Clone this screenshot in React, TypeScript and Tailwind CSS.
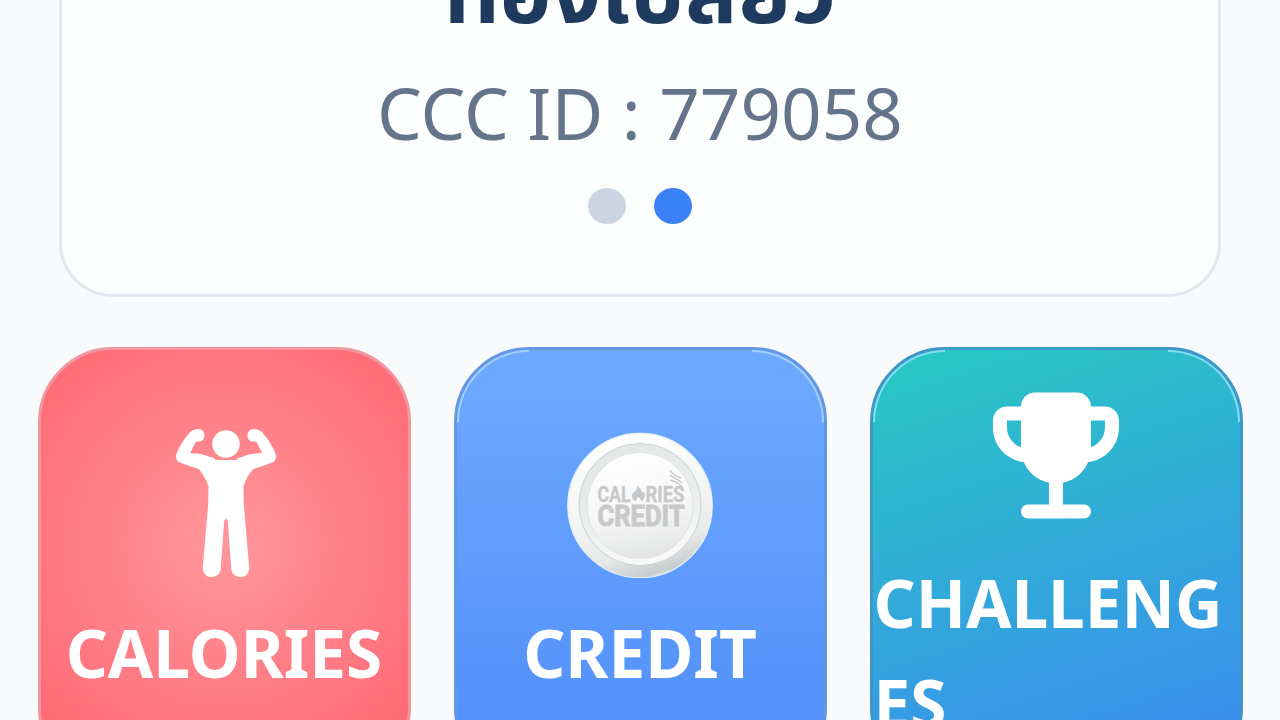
import React from "react"

interface StatCardProps {
  label: string
  className: string
  shine?: string
  children: React.ReactNode
}

function StatCard({ label, className, shine, children }: StatCardProps) {
  return (
    <div
      className={`relative flex h-[436px] w-[373px] shrink-0 flex-col items-center justify-center gap-[25px] rounded-[75px] border-[3px] px-[1px] ${className}`}
    >
      {/* Thin highlight that follows the top corners */}
      {shine && (
        <>
          <span
            className={`absolute top-0 left-0 h-[72px] w-[72px] rounded-tl-[72px] border-t-2 border-l-2 ${shine}`}
          />
          <span
            className={`absolute top-0 right-0 h-[72px] w-[72px] rounded-tr-[72px] border-t-2 border-r-2 ${shine}`}
          />
        </>
      )}
      {children}
      <p className="text-[65.7px] leading-[100px] font-bold break-all text-white">
        {label}
      </p>
    </div>
  )
}

function FlexingPerson() {
  return (
    <svg
      viewBox="-0.7 0.5 150 150"
      className="h-[150px] w-[150px] shrink-0"
      fill="white"
    >
      <circle cx="76.3" cy="16.5" r="13.700" />
      <path d="M49.500 1.500Q44 1 40 5Q31 15 26.500 27Q25.500 32 29 34.500Q40 39 49 41.500Q55 48 58.800 58.500L58.500 77L53 141Q54 149.500 61.500 149.500Q69.500 149.500 71 142L74.500 93Q76.300 90 78.100 93L81.600 142Q83.100 149.500 91.100 149.500Q98.600 149.500 99.600 141L94.100 77L93.800 58.500Q97.600 48 103.600 41.500Q112.600 39 123.600 34.500Q127.100 32 126.100 27Q121.600 15 112.600 5Q108.600 1 103.100 1.500A6.500 6.500 0 0 0 102 14Q106 13.500 107 15L112.500 25.500Q98 26 92.500 29.500Q87.500 29.500 87 32.500H65.600Q65 29.500 60 29.500Q54 26 40.500 25.500L45.600 15Q47 13.500 50.500 14A6.500 6.500 0 0 0 49.500 1.500Z" />
    </svg>
  )
}

function CoinIcon() {
  return (
    <svg viewBox="0 0 150 150" className="h-[150px] w-[150px] shrink-0">
      <defs>
        <linearGradient id="rim" x1="0.3" y1="0" x2="0.6" y2="1">
          <stop offset="0" stopColor="#ffffff" />
          <stop offset="0.45" stopColor="#f5f6f6" />
          <stop offset="0.8" stopColor="#e8eaea" />
          <stop offset="0.97" stopColor="#c9cccd" />
          <stop offset="1" stopColor="#e4e7e9" />
        </linearGradient>
        <linearGradient id="groove" x1="0.3" y1="0" x2="0.6" y2="1">
          <stop offset="0" stopColor="#e2e6e7" />
          <stop offset="0.6" stopColor="#eceeee" />
          <stop offset="1" stopColor="#fafafa" />
        </linearGradient>
        <linearGradient id="face" x1="0.4" y1="0" x2="0.6" y2="1">
          <stop offset="0" stopColor="#ffffff" />
          <stop offset="0.5" stopColor="#f7f7f7" />
          <stop offset="1" stopColor="#e4e6e6" />
        </linearGradient>
      </defs>
      <circle cx="75" cy="77.500" r="72.200" fill="url(#rim)" stroke="#e8f1fc" strokeWidth="1.200" />
      <circle cx="75" cy="76.500" r="61" fill="url(#groove)" stroke="#cdd1d2" strokeWidth="1" />
      <circle cx="75" cy="77.500" r="53" fill="url(#face)" stroke="#e0e3e3" strokeWidth="1" />
      <g
        fill="#c8c9ca"
        stroke="#c8c9ca"
        fontFamily="Roboto, 'Liberation Sans', sans-serif"
        fontWeight="700"
      >
        <text x="32.500" y="73.500" fontSize="22" strokeWidth="0.3" textLength="33" lengthAdjust="spacingAndGlyphs">CAL</text>
        <text x="80.500" y="73.500" fontSize="22" strokeWidth="0.3" textLength="39" lengthAdjust="spacingAndGlyphs">RIES</text>
        <text x="32.500" y="98" fontSize="29" strokeWidth="1" textLength="87" lengthAdjust="spacingAndGlyphs">CREDIT</text>
      </g>
      <path
        d="M72 57.500C76 60 77 63 76.500 65.500L78.500 63C81 67 80 71 76.500 73.500C76 71 74.500 70 73 68.500C72.500 70.500 71 71.500 71 73.500C66.500 72 65.500 67 68.500 64.500C71 62.500 72.500 60.500 72 57.500Z"
        fill="#c8c9ca"
      />
      <path
        d="M105 42C107 46 111 48 116 50M105 47C108 50 113 51 117 55M105 52C109 53 114 55 118 60"
        fill="none"
        stroke="#c8c9ca"
        strokeWidth="1.500"
      />
    </svg>
  )
}

function TrophyIcon() {
  return (
    <svg
      viewBox="1.29 0.93 21.43 21.43"
      className="h-[150px] w-[150px] shrink-0"
      fill="white"
    >
      <path d="M19 5h-2c0-1.100-.9-2-2-2H9c-1.100 0-2 .9-2 2H5c-1.100 0-2 .9-2 2v1c0 2.550 1.920 4.630 4.390 4.940.63 1.500 1.980 2.630 3.610 2.960V19H8c-.55 0-1 .45-1 1s.45 1 1 1h8c.55 0 1-.45 1-1s-.45-1-1-1h-3v-3.100c1.630-.33 2.980-1.460 3.610-2.960C19.080 12.630 21 10.550 21 8V7c0-1.100-.9-2-2-2zM5 8V7h2v3.820C5.840 10.400 5 9.300 5 8zm14 0c0 1.300-.84 2.400-2 2.820V7h2v1z" />
    </svg>
  )
}

export default function App() {
  return (
    <div className="flex h-[720px] w-[1280px] flex-col items-center overflow-hidden bg-[#f9fafc] font-['Noto_Sans','Noto_Sans_Thai',sans-serif]">
      {/* Member card */}
      <section className="flex h-[297px] w-[1162px] shrink-0 flex-col items-center justify-end rounded-b-[54px] border-x-[3px] border-b-[3px] border-[#e3e7ef] bg-[#fcfefd] pb-[70px]">
        <h1 className="shrink-0 text-[87px] leading-[120px] font-bold whitespace-nowrap text-[#1e3a5f]">
          ทองเปลียว
        </h1>
        <p className="mt-[15px] shrink-0 text-[71px] leading-[98px] whitespace-nowrap text-[#64748b]">
          CCC ID : 779058
        </p>
        <div className="mt-[26px] flex gap-7">
          <span className="h-9 w-[38px] rounded-[50%] bg-[#cbd5e1]" />
          <span className="h-9 w-[38px] rounded-[50%] bg-[#3b82f6]" />
        </div>
      </section>

      {/* Stats */}
      <section className="mt-[50px] flex w-[1205px] shrink-0 justify-between">
        <StatCard
          label="CALORIES"
          className="border-[#f0969f] bg-[radial-gradient(circle_at_50%_45%,#ff979c_0%,#ff6b76_82%)]"
        >
          <FlexingPerson />
        </StatCard>
        <StatCard
          label="CREDIT"
          className="border-[#6397e6] bg-linear-to-b from-[#6eaaff] to-[#4f8df9]"
          shine="border-[#a5cdff]"
        >
          <CoinIcon />
        </StatCard>
        <StatCard
          label="CHALLENGES"
          className="border-[#3d98c8] bg-[linear-gradient(162deg,#28c9c2_0%,#3b8bf0_95%)]"
          shine="border-[#84dcf2]"
        >
          <TrophyIcon />
        </StatCard>
      </section>
    </div>
  )
}
